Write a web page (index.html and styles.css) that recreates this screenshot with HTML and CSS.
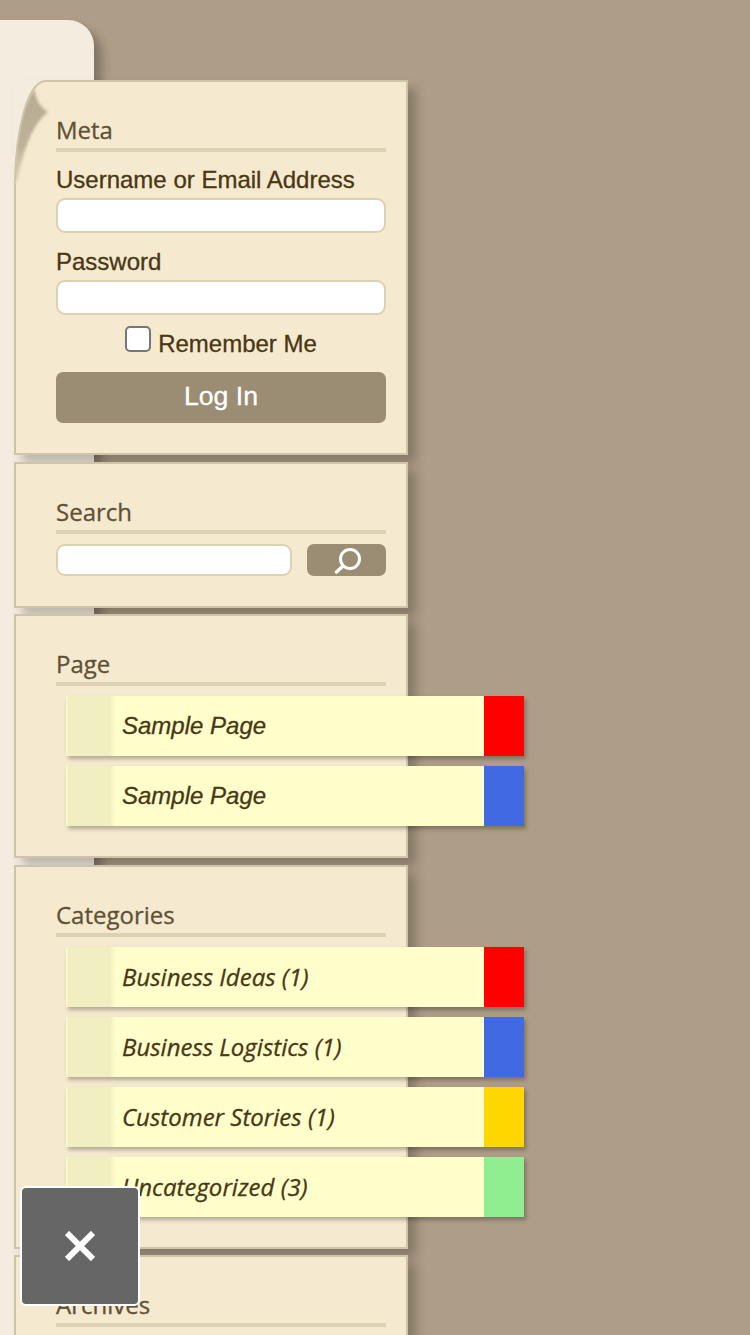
FILE: index.html
```html
<!DOCTYPE html>
<html lang="en">
<head>
<meta charset="utf-8">
<title>Sidebar</title>
<link rel="stylesheet" href="styles.css">
</head>
<body>
<div class="paper"></div>
<aside class="sidebar">
  <section class="panel panel-meta">
    <svg class="curl" width="52" height="114" viewBox="0 0 52 114">
      <defs>
        <filter id="soft" x="-20%" y="-20%" width="140%" height="140%"><feGaussianBlur stdDeviation="1.4"/></filter>
        <linearGradient id="fold" x1="0" y1="0" x2="0" y2="1"><stop offset="0" stop-color="#b7ab93"/><stop offset=".6" stop-color="#bdb198"/><stop offset="1" stop-color="#e5d9bf"/></linearGradient>
        <clipPath id="sheet"><path d="M46 1C27 1 16 51 15 101V114H52V1Z"/></clipPath>
      </defs>
      <path d="M14 0H46C27 1 16 51 15 100H14Z" fill="#f4ecdf"/>
      <g clip-path="url(#sheet)">
        <path d="M34 8Q36 25 48 32Q27 48 17 102L13 105V50Z" fill="url(#fold)" filter="url(#soft)"/>
      </g>
      <path d="M46 1C27 1 16 51 15 101" fill="none" stroke="#cfc4aa" stroke-width="2"/>
    </svg>
    <h2 class="title">Meta</h2>
    <form class="login">
      <label class="field"><span class="label">Username or Email Address</span><input class="input" type="text"></label>
      <label class="field"><span class="label">Password</span><input class="input" type="password"></label>
      <label class="remember"><input class="check" type="checkbox"><span class="label">Remember Me</span></label>
      <button class="button" type="button">Log In</button>
    </form>
  </section>
  <section class="panel panel-search">
    <h2 class="title">Search</h2>
    <form class="search">
      <input class="input search-input" type="text">
      <button class="button search-button" type="button" aria-label="Search">
        <svg width="28" height="28" viewBox="0 0 28 28" fill="none" stroke="#fff" stroke-width="3"><circle cx="17" cy="13" r="9.5"/><path d="M10 20L3.5 26" stroke-linecap="round" stroke-width="3.4"/></svg>
      </button>
    </form>
  </section>
  <section class="panel panel-page">
    <h2 class="title">Page</h2>
    <ul class="notes notes-sans">
      <li class="note red"><span>Sample Page</span></li>
      <li class="note blue"><span>Sample Page</span></li>
    </ul>
  </section>
  <section class="panel panel-categories">
    <h2 class="title">Categories</h2>
    <ul class="notes">
      <li class="note red"><span>Business Ideas (1)</span></li>
      <li class="note blue"><span>Business Logistics (1)</span></li>
      <li class="note gold"><span>Customer Stories (1)</span></li>
      <li class="note green"><span>Uncategorized (3)</span></li>
    </ul>
  </section>
  <section class="panel panel-archives">
    <h2 class="title">Archives</h2>
  </section>
</aside>
<button class="close" type="button" aria-label="Close">
  <svg width="30" height="30" viewBox="0 0 30 30" fill="none" stroke="#fff" stroke-width="6"><path d="M2 2L28 28M28 2L2 28"/></svg>
</button>
</body>
</html>
```
FILE: styles.css
```css
* { box-sizing: border-box; }
body {
  position: relative;
  margin: 0;
  width: 750px;
  height: 1335px;
  overflow: hidden;
  background: #ae9d87;
  color: #493714;
  font: 24px/30px "Liberation Sans", Arial, sans-serif;
  -webkit-text-stroke: .3px;
}
/* Page sheet lying beneath the sidebar */
.paper {
  position: absolute;
  left: -20px;
  top: 20px;
  width: 114px;
  height: 1315px;
  border-radius: 0 26px 0 0;
  background: #f4ecdf;
  box-shadow: 8px 8px 10px rgba(0, 0, 0, .25);
}
.sidebar {
  position: relative;
  display: flex;
  flex-direction: column;
  width: 408px;
  padding: 80px 0 0 14px;
}
.panel {
  position: relative;
  flex: none;
  padding: 32px 20px 0 40px;
  border: 2px solid #cfc4aa;
  background: #f5e9cf;
  box-shadow: 8px 8px 10px rgba(0, 0, 0, .23);
}
.panel-meta { height: 375px; margin-bottom: 7px; }
.panel-search { height: 146px; margin-bottom: 6px; }
.panel-page { height: 244px; margin-bottom: 7px; }
.panel-categories { height: 384px; margin-bottom: 6px; }
.panel-archives { height: 80px; border-bottom: 0; }
.curl { position: absolute; left: -16px; top: -2px; }
.title {
  margin: 0;
  height: 38px;
  border-bottom: 4px solid #dcd0b5;
  color: #5f5136;
  font: 400 24px/32px "Open Sans", sans-serif;
}
.login { display: flex; flex-direction: column; padding-top: 13px; }
.field { display: flex; flex-direction: column; height: 82px; }
.label { height: 33px; white-space: nowrap; }
.input {
  width: 100%;
  height: 35px;
  margin: 0;
  border: 2px solid #dcd0b5;
  border-radius: 9px;
  background: #fff;
}
.remember { display: flex; justify-content: center; gap: 7px; height: 43px; }
.check {
  appearance: none;
  width: 26px;
  height: 26px;
  margin: -3px 0 0;
  border: 2px solid #767676;
  border-radius: 5px;
  background: #fff;
}
.button {
  height: 51px;
  padding: 0 0 2px;
  border: 0;
  border-radius: 7px;
  background: #9a8d73;
  color: #fff;
  font: 26.67px/49px "Liberation Sans", Arial, sans-serif;
}
.search { display: flex; justify-content: space-between; padding-top: 10px; }
.search-input { width: 236px; height: 32px; }
.search-button {
  display: flex;
  align-items: center;
  justify-content: center;
  width: 79px;
  height: 32px;
  padding: 0;
}
.notes {
  display: flex;
  flex-direction: column;
  gap: 10px;
  width: 458px;
  margin: 10px 0 0 10px;
  padding: 0;
  list-style: none;
  font: italic 24px/60px "Open Sans", sans-serif;
}
.notes-sans { font-family: "Liberation Sans", Arial, sans-serif; }
.note {
  height: 60px;
  padding-left: 56px;
  border-right: 40px solid;
  background: linear-gradient(90deg, #ffffcb 0, #f1efc1 2px, #f1efc1 44px, #ffffcb 50px);
  box-shadow: 2px 3px 4px rgba(0, 0, 0, .27);
}
.red { border-color: #f00; }
.blue { border-color: #4169e1; }
.gold { border-color: #ffd700; }
.green { border-color: #90ee90; }
.close {
  position: absolute;
  left: 20px;
  top: 1186px;
  display: flex;
  align-items: center;
  justify-content: center;
  width: 120px;
  height: 120px;
  padding: 0;
  border: 2px solid #fff;
  border-radius: 6px;
  background: #666;
}
```
